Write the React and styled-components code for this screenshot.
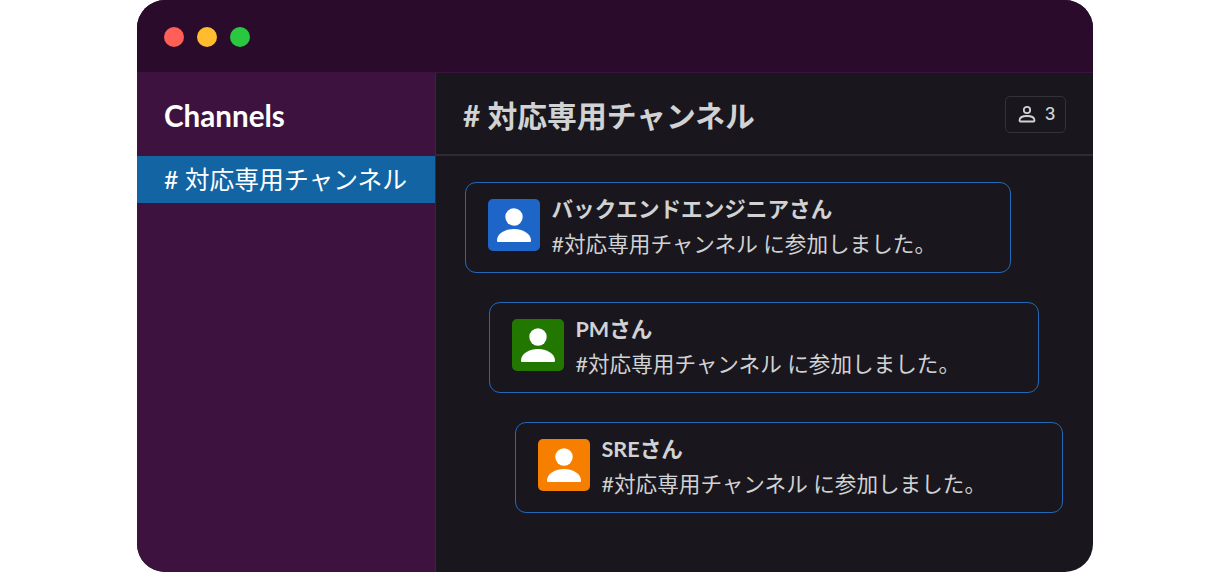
import styled, { createGlobalStyle } from "styled-components";

const GlobalStyle = createGlobalStyle`
  html, body {
    margin: 0;
    height: 100%;
    background: #fff;
  }
  body {
    font-family: Lato, "Noto Sans CJK JP", sans-serif;
  }
`;

const Page = styled.div`
  display: flex;
  justify-content: center;
  height: 572px;
  overflow: hidden;
`;

const Window = styled.div`
  width: 956px;
  height: 572px;
  border-radius: 28px;
  overflow: hidden;
  display: flex;
  flex-direction: column;
  background: #19171d;
`;

const TitleBar = styled.div`
  height: 73px;
  flex: none;
  box-sizing: border-box;
  padding: 27px 0 0 27px;
  display: flex;
  gap: 13px;
  align-items: flex-start;
  background: #2a0b2b;
  border-bottom: 1px solid #3d1140;
`;

const Light = styled.span`
  width: 20px;
  height: 20px;
  border-radius: 50%;
  background: ${(p) => p.$color};
`;

const Body = styled.div`
  flex: 1;
  display: flex;
  min-height: 0;
`;

const Sidebar = styled.aside`
  width: 299px;
  flex: none;
  box-sizing: border-box;
  background: #3d123e;
  border-right: 1px solid #332a38;
`;

const SidebarTitle = styled.div`
  height: 83px;
  box-sizing: border-box;
  padding: 1px 0 0 27px;
  display: flex;
  align-items: center;
  font-size: 29.6px;
  font-weight: 700;
  color: #fff;
`;

const ChannelRow = styled.div`
  height: 47px;
  box-sizing: border-box;
  padding: 0 0 4px 27px;
  display: flex;
  align-items: center;
  font-size: 24.8px;
  color: #fff;
  background: #1264a3;
  white-space: nowrap;
`;

const Main = styled.main`
  flex: 1;
  min-width: 0;
  display: flex;
  flex-direction: column;
`;

const Header = styled.header`
  height: 83px;
  flex: none;
  box-sizing: border-box;
  padding: 1px 27px 0;
  display: flex;
  align-items: center;
  justify-content: space-between;
  border-bottom: 2px solid #2e2c32;
`;

const HeaderTitle = styled.h1`
  margin: -1px 0 0;
  font-size: 29.8px;
  font-weight: 700;
  color: #d1d2d3;
  white-space: nowrap;
`;

const MemberButton = styled.div`
  width: 61px;
  height: 37px;
  box-sizing: border-box;
  padding-left: 2px;
  display: flex;
  align-items: center;
  justify-content: center;
  gap: 9px;
  border: 1px solid #33323a;
  border-radius: 5px;
  font-family: Inter, sans-serif;
  font-size: 17px;
  font-weight: 500;
  color: #d1d2d3;
`;

const Feed = styled.div`
  display: flex;
  flex-direction: column;
  gap: 29px;
  padding-top: 26px;
`;

const Card = styled.div`
  width: ${(p) => p.$width}px;
  height: 91px;
  margin-left: ${(p) => p.$offset}px;
  box-sizing: border-box;
  padding: 16px 22px;
  display: flex;
  gap: 11.5px;
  border: 1px solid #2469b8;
  border-radius: 11px;
`;

const Avatar = styled.div`
  width: 52px;
  height: 52px;
  flex: none;
  border-radius: 5px;
  background: ${(p) => p.$color};
  display: flex;
  align-items: center;
  justify-content: center;
`;

const Texts = styled.div`
  display: flex;
  flex-direction: column;
  gap: 15px;
  white-space: nowrap;
`;

const Name = styled.div`
  font-size: 21.6px;
  line-height: 20px;
  font-weight: 700;
  color: #d1d2d3;
`;

const Message = styled.div`
  font-size: 21.6px;
  line-height: 20px;
  color: #d1d2d3;
`;

const PersonSolid = () => (
  <svg width="52" height="52" viewBox="0 0 52 52">
    <circle cx="26" cy="18" r="8.7" fill="#fff" />
    <path d="M9 41.500c0-7 8.500-11.500 17-11.500s17 4.500 17 11.500c0 1-.6 1.500-1.500 1.500h-31c-.9 0-1.500-.5-1.500-1.500z" fill="#fff" />
  </svg>
);

const PersonOutline = () => (
  <svg width="18" height="18" viewBox="0 0 18 18" fill="none" stroke="#d1d2d3" strokeWidth="1.8">
    <circle cx="9" cy="5" r="3.2" />
    <path d="M1.500 15.500c0-2.800 3.200-4.500 7.500-4.500s7.500 1.700 7.500 4.500c0 .6-.4 1-1 1h-13c-.6 0-1-.4-1-1z" strokeLinejoin="round" />
  </svg>
);

const members = [
  { name: "バックエンドエンジニアさん", color: "#1d66c7", width: 546, offset: 29 },
  { name: "PMさん", color: "#227700", width: 550, offset: 53 },
  { name: "SREさん", color: "#f77f00", width: 548, offset: 79 },
];

const App = () => {
  return (
    <Page>
      <GlobalStyle />
      <Window>
        <TitleBar>
          <Light $color="#ff5f57" />
          <Light $color="#febc2e" />
          <Light $color="#28c840" />
        </TitleBar>
        <Body>
          <Sidebar>
            <SidebarTitle>Channels</SidebarTitle>
            <ChannelRow># 対応専用チャンネル</ChannelRow>
          </Sidebar>
          <Main>
            <Header>
              <HeaderTitle># 対応専用チャンネル</HeaderTitle>
              <MemberButton>
                <PersonOutline />3
              </MemberButton>
            </Header>
            <Feed>
              {members.map((m) => (
                <Card key={m.name} $width={m.width} $offset={m.offset}>
                  <Avatar $color={m.color}>
                    <PersonSolid />
                  </Avatar>
                  <Texts>
                    <Name>{m.name}</Name>
                    <Message>#対応専用チャンネル に参加しました。</Message>
                  </Texts>
                </Card>
              ))}
            </Feed>
          </Main>
        </Body>
      </Window>
    </Page>
  );
};

export default App;
